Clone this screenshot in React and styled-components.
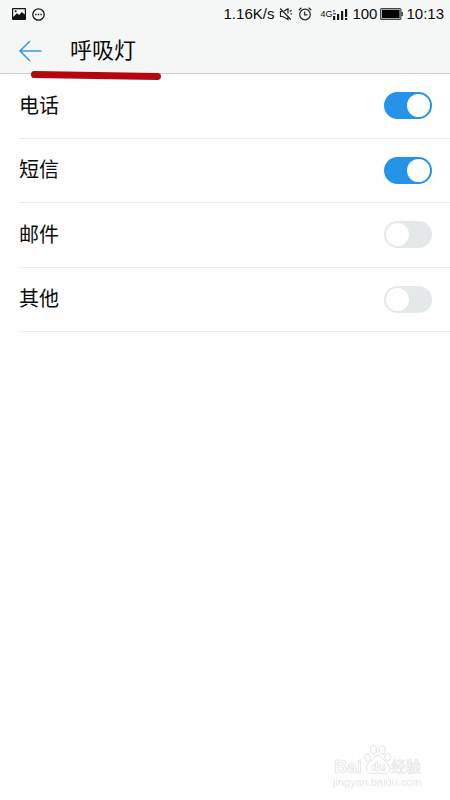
import React, { useState } from 'react';
import styled, { createGlobalStyle } from 'styled-components';

const GlobalStyle = createGlobalStyle`
  * {
    box-sizing: border-box;
  }

  body {
    margin: 0;
    background: #fefefe;
    color: #0a0a0a;
    font-family: 'Liberation Sans', 'Noto Sans CJK SC', sans-serif;
  }
`;

const Page = styled.div`
  min-height: 100vh;
`;

const Top = styled.div`
  position: relative;
  background: #f5f7f7;
  border-bottom: 1px solid #cccece;
`;

const StatusBar = styled.div`
  display: flex;
  align-items: center;
  justify-content: space-between;
  height: 28px;
  padding: 0 6px 0 12px;
  font-size: 15px;
  line-height: 28px;
`;

const StatusGroup = styled.div`
  display: flex;
  align-items: center;
  gap: ${({ $gap }) => $gap}px;

  svg {
    display: block;
    flex: none;
  }
`;

const Network = styled.span`
  font-size: 9px;
`;

const Header = styled.header`
  display: flex;
  align-items: center;
  gap: 28px;
  height: 45px;
  padding: 0 18px;

  h1 {
    margin: 0;
    font-size: 22px;
    line-height: 44px;
    font-weight: 400;
  }
`;

const BackButton = styled.button`
  display: flex;
  padding: 0;
  border: 0;
  background: none;
  cursor: pointer;
`;

const Marker = styled.svg`
  position: absolute;
  left: 30px;
  top: 68px;
  pointer-events: none;
`;

const List = styled.ul`
  display: grid;
  grid-auto-rows: 1fr;
  min-height: 258px;
  margin: 0;
  padding: 0 0 0 19px;
  list-style: none;
`;

const Row = styled.li`
  border-bottom: 1px solid #eaebeb;

  label {
    display: flex;
    align-items: center;
    justify-content: space-between;
    height: 100%;
    padding-right: 18px;
    font-size: 20px;
    line-height: 28px;
  }
`;

const Switch = styled.input`
  appearance: none;
  display: flex;
  align-items: center;
  width: 48px;
  height: 27px;
  margin: 0;
  padding: 0 2px;
  border-radius: 14px;
  background: #e4e8e8;
  cursor: pointer;

  &::before {
    content: '';
    width: 23px;
    height: 23px;
    border-radius: 50%;
    background: #fefefe;
  }

  &:checked {
    justify-content: flex-end;
    background: #2593e8;
  }
`;

const Watermark = styled.div`
  position: fixed;
  right: 27px;
  bottom: 13px;
  width: 90px;
  color: #e6e6e6;
  font-size: 11px;
  line-height: 9px;
  pointer-events: none;

  svg {
    display: block;
    overflow: visible;
  }
`;

const items = [
  { id: 'phone', label: '电话', on: true },
  { id: 'sms', label: '短信', on: true },
  { id: 'mail', label: '邮件', on: false },
  { id: 'other', label: '其他', on: false },
];

const PictureIcon = () => (
  <svg width="14" height="12" viewBox="0 0 14 12">
    <rect width="14" height="12" rx="1" fill="#111" />
    <path d="M1.2 1.2h11.6v5.3L9.8 4 7.2 7 5 5.2 1.2 9z" fill="#f5f7f7" />
    <circle cx="3.7" cy="3.2" r="1" fill="#111" />
  </svg>
);

const MessageIcon = () => (
  <svg width="13" height="13" viewBox="0 0 13 13">
    <circle cx="6.5" cy="6.5" r="5.7" fill="none" stroke="#151515" strokeWidth="1.3" />
    <path d="M3.2 6.5h1.4M5.8 6.5h1.4M8.4 6.5h1.4" stroke="#151515" strokeWidth="1.4" />
  </svg>
);

const MuteIcon = () => (
  <svg width="14" height="14" viewBox="0 0 14 14" fill="none" stroke="#222" strokeWidth="1.2">
    <path d="M3.5 4.5h-2v5h2.3l5.2 3V9.5M5.2 3.9L9 1.8v4.7" />
    <path d="M1.2 1.5l10.6 11M11 4.5l1.6-1.4M11.3 7h1.8" />
  </svg>
);

const AlarmIcon = () => (
  <svg width="14" height="14" viewBox="0 0 14 14" fill="none" stroke="#222" strokeWidth="1.2">
    <circle cx="7" cy="7.5" r="5.3" />
    <path d="M6.7 4.5v3.3h2.7M.7 3.2L3.4.8M13.3 3.2L10.6.8" />
  </svg>
);

const SignalIcon = () => (
  <svg width="16" height="13" viewBox="0 0 16 13" fill="#161616">
    <path d="M1 8h2.200v4H1zM5 6h2.200v6H5zM9 3h2.200v9H9zM13 1h2.200v8H13zM13 10h2.200v2H13z" />
    <path d="M1 2h2v1.500H1zM1 5h3v1.500H1z" opacity=".65" />
  </svg>
);

const BatteryIcon = () => (
  <svg width="23" height="12" viewBox="0 0 23 12">
    <rect x=".6" y=".6" width="20.3" height="10.8" rx="1" fill="#c4c6c6" stroke="#444" strokeWidth="1.1" />
    <rect x="2" y="2" width="17.5" height="8" fill="#050505" />
    <path d="M21.4 4h1.4v4h-1.4z" fill="#222" />
  </svg>
);

const BackIcon = () => (
  <svg width="24" height="22" viewBox="0 0 24 22" fill="none" stroke="#3a9ad9" strokeWidth="1.6">
    <path d="M23.5 11H2M12 1L2 11l10 10" />
  </svg>
);

const BaiduLogo = () => (
  <svg width="90" height="34" viewBox="0 0 90 34" fill="#fefefe" stroke="#e0e0e0">
    <text x="1" y="29" fontSize="18" fontWeight="700" strokeWidth=".7">Bai</text>
    <ellipse cx="34.5" cy="13.5" rx="2.8" ry="3.8" />
    <ellipse cx="40.5" cy="6" rx="3" ry="4.2" />
    <ellipse cx="49" cy="6" rx="3" ry="4.2" />
    <ellipse cx="54.5" cy="13" rx="2.8" ry="3.8" />
    <path d="M45 11.5c-3 0-4 2.500-6 4.500s-5.500 3.500-5.500 8 3 5.500 6 5.500c2 0 3-.5 5.500-.5s3.500.5 5.500.5c3.500 0 6-1.500 6-5.500s-3.500-6-5.500-8-3-4.500-6-4.500z" />
    <text x="38" y="27" fontSize="12" fontWeight="700" strokeWidth=".6">du</text>
    <text x="58" y="28" fontSize="15" fontWeight="500" strokeWidth=".5" fill="#f6f6f6">经验</text>
  </svg>
);

const App = () => {
  const [settings, setSettings] = useState(items);

  const toggle = (id) =>
    setSettings(settings.map((item) => (item.id === id ? { ...item, on: !item.on } : item)));

  return (
    <Page>
      <GlobalStyle />
      <Top>
        <StatusBar>
          <StatusGroup $gap={6}>
            <PictureIcon />
            <MessageIcon />
          </StatusGroup>
          <StatusGroup $gap={8}>
            <StatusGroup $gap={5}>
              <span>1.16K/s</span>
              <MuteIcon />
              <AlarmIcon />
            </StatusGroup>
            <StatusGroup $gap={4}>
              <StatusGroup $gap={0}>
                <Network>4G</Network>
                <SignalIcon />
              </StatusGroup>
              <StatusGroup $gap={3}>
                <span>100</span>
                <BatteryIcon />
                <span>10:13</span>
              </StatusGroup>
            </StatusGroup>
          </StatusGroup>
        </StatusBar>
        <Header>
          <BackButton type="button" aria-label="返回">
            <BackIcon />
          </BackButton>
          <h1>呼吸灯</h1>
        </Header>
        <Marker width="132" height="14" viewBox="0 0 132 14">
          <path d="M4.5 6.5L66 7.5l61.5 1" fill="none" stroke="#b3070f" strokeWidth="7" strokeLinecap="round" />
        </Marker>
      </Top>
      <List>
        {settings.map(({ id, label, on }) => (
          <Row key={id}>
            <label htmlFor={id}>
              {label}
              <Switch id={id} type="checkbox" role="switch" checked={on} onChange={() => toggle(id)} />
            </label>
          </Row>
        ))}
      </List>
      <Watermark>
        <BaiduLogo />
        jingyan.baidu.com
      </Watermark>
    </Page>
  );
};

export default App;
